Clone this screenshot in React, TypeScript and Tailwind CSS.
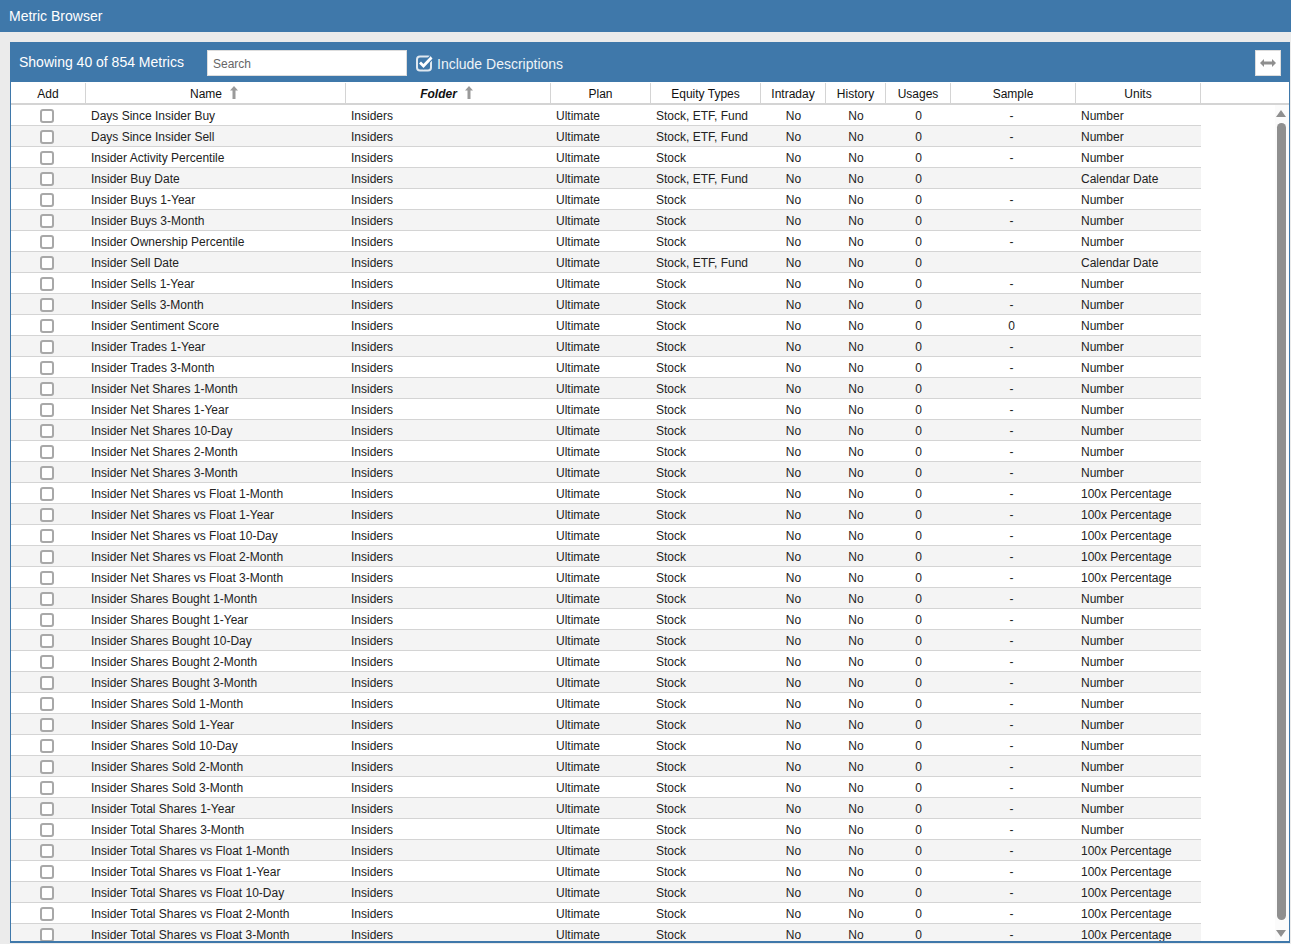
import React from 'react'

type Row = { name: string; types?: string; units?: string; sample?: string }

const rows: Row[] = [
  { name: 'Days Since Insider Buy', types: 'Stock, ETF, Fund' },
  { name: 'Days Since Insider Sell', types: 'Stock, ETF, Fund' },
  { name: 'Insider Activity Percentile' },
  { name: 'Insider Buy Date', types: 'Stock, ETF, Fund', units: 'Calendar Date', sample: '' },
  { name: 'Insider Buys 1-Year' },
  { name: 'Insider Buys 3-Month' },
  { name: 'Insider Ownership Percentile' },
  { name: 'Insider Sell Date', types: 'Stock, ETF, Fund', units: 'Calendar Date', sample: '' },
  { name: 'Insider Sells 1-Year' },
  { name: 'Insider Sells 3-Month' },
  { name: 'Insider Sentiment Score', sample: '0' },
  { name: 'Insider Trades 1-Year' },
  { name: 'Insider Trades 3-Month' },
  { name: 'Insider Net Shares 1-Month' },
  { name: 'Insider Net Shares 1-Year' },
  { name: 'Insider Net Shares 10-Day' },
  { name: 'Insider Net Shares 2-Month' },
  { name: 'Insider Net Shares 3-Month' },
  { name: 'Insider Net Shares vs Float 1-Month', units: '100x Percentage' },
  { name: 'Insider Net Shares vs Float 1-Year', units: '100x Percentage' },
  { name: 'Insider Net Shares vs Float 10-Day', units: '100x Percentage' },
  { name: 'Insider Net Shares vs Float 2-Month', units: '100x Percentage' },
  { name: 'Insider Net Shares vs Float 3-Month', units: '100x Percentage' },
  { name: 'Insider Shares Bought 1-Month' },
  { name: 'Insider Shares Bought 1-Year' },
  { name: 'Insider Shares Bought 10-Day' },
  { name: 'Insider Shares Bought 2-Month' },
  { name: 'Insider Shares Bought 3-Month' },
  { name: 'Insider Shares Sold 1-Month' },
  { name: 'Insider Shares Sold 1-Year' },
  { name: 'Insider Shares Sold 10-Day' },
  { name: 'Insider Shares Sold 2-Month' },
  { name: 'Insider Shares Sold 3-Month' },
  { name: 'Insider Total Shares 1-Year' },
  { name: 'Insider Total Shares 3-Month' },
  { name: 'Insider Total Shares vs Float 1-Month', units: '100x Percentage' },
  { name: 'Insider Total Shares vs Float 1-Year', units: '100x Percentage' },
  { name: 'Insider Total Shares vs Float 10-Day', units: '100x Percentage' },
  { name: 'Insider Total Shares vs Float 2-Month', units: '100x Percentage' },
  { name: 'Insider Total Shares vs Float 3-Month', units: '100x Percentage' },
]

function SortArrow() {
  return (
    <svg width="8" height="13" viewBox="0 0 8 13" className="ml-[8px] mr-[3px] mb-[3px]">
      <path d="M4 0 L8 4.5 L5.5 4.5 L5.5 13 L2.5 13 L2.5 4.5 L0 4.5 Z" fill="#9a9a9a" />
    </svg>
  )
}

function HeaderCell({ w, children }: { w: string; children?: React.ReactNode }) {
  return (
    <div className={`${w} flex-none h-full flex items-center justify-center pt-[1px] border-r border-[#d4d4d4]`}>
      {children}
    </div>
  )
}

export default function App() {
  return (
    <div className="h-[944px] overflow-hidden bg-[#ebebeb] text-[12px] text-[#222222] font-['Liberation_Sans',Arial,sans-serif]">
      <div className="h-[32px] bg-[#3f78aa] flex items-center pl-[9px] text-[14px] text-white">Metric Browser</div>

      <div className="mt-[10px] ml-[10px] mr-[1px] h-[901px] flex flex-col bg-white border-l border-r border-b-2 border-[#3f78aa]">
        <div className="h-[40px] flex-none -mx-px bg-[#3f78aa] flex items-center text-white">
          <span className="ml-[9px] w-[188px] text-[14px] leading-none mb-[1px]">Showing 40 of 854 Metrics</span>
          <input
            readOnly
            placeholder="Search"
            className="w-[200px] h-[26px] mt-[2px] bg-white border border-[#dddddd] px-[5px] pt-[1px] text-[12px] text-[#444444] placeholder:text-[#666666] outline-none"
          />
          <svg width="18" height="18" viewBox="0 0 18 18" className="ml-[8px] mt-[1px]">
            <rect x="2" y="2.5" width="14" height="14" rx="3" fill="none" stroke="#dfe8f0" strokeWidth="2" />
            <path d="M5 8.5 L8.5 12 L16.5 3.5" fill="none" stroke="#3f78aa" strokeWidth="5" />
            <path d="M5 8.5 L8.5 12 L16.5 3.5" fill="none" stroke="#ffffff" strokeWidth="2.8" />
          </svg>
          <span className="ml-[4px] mt-[4px] text-[14px] text-[#eef3f7]">Include Descriptions</span>
          <button className="ml-auto mr-[9px] mt-[2px] w-[26px] h-[26px] bg-white border border-[#dddddd] flex items-center justify-center">
            <svg width="16" height="8" viewBox="0 0 16 8">
              <path d="M0 4 L4 0 L4 2.5 L12 2.5 L12 0 L16 4 L12 8 L12 5.5 L4 5.5 L4 8 Z" fill="#8f8f8f" />
            </svg>
          </button>
        </div>

        <div className="h-[22px] flex-none mt-px flex items-stretch border-b-2 border-[#d4d4d4] text-[#111111]">
          <HeaderCell w="w-[75px]">Add</HeaderCell>
          <HeaderCell w="w-[260px]">Name<SortArrow /></HeaderCell>
          <HeaderCell w="w-[205px]"><span className="font-bold italic">Folder</span><SortArrow /></HeaderCell>
          <HeaderCell w="w-[100px]">Plan</HeaderCell>
          <HeaderCell w="w-[110px]">Equity Types</HeaderCell>
          <HeaderCell w="w-[65px]">Intraday</HeaderCell>
          <HeaderCell w="w-[60px]">History</HeaderCell>
          <HeaderCell w="w-[65px]">Usages</HeaderCell>
          <HeaderCell w="w-[125px]">Sample</HeaderCell>
          <HeaderCell w="w-[125px]">Units</HeaderCell>
        </div>

        <div className="flex-1 min-h-0 flex overflow-hidden">
          <div className="w-[1190px] flex-none">
            {rows.map((r, i) => (
              <div
                key={r.name}
                className={`h-[21px] flex items-center pt-[1px] border-b border-[#d4d4d4] ${i % 2 === 1 ? 'bg-[#f4f4f4]' : 'bg-white'}`}
              >
                <div className="w-[75px] flex-none flex justify-center pr-[4px]">
                  <span className="block w-[14px] h-[14px] rounded-[3px] border-2 border-[#a8a8a8] bg-white" />
                </div>
                <div className="w-[260px] flex-none pl-[5px]">{r.name}</div>
                <div className="w-[205px] flex-none pl-[5px]">Insiders</div>
                <div className="w-[100px] flex-none pl-[5px]">Ultimate</div>
                <div className="w-[110px] flex-none pl-[5px]">{r.types ?? 'Stock'}</div>
                <div className="w-[65px] flex-none text-center">No</div>
                <div className="w-[60px] flex-none text-center">No</div>
                <div className="w-[65px] flex-none text-center">0</div>
                <div className="w-[125px] flex-none text-center pr-[4px]">{r.sample ?? '-'}</div>
                <div className="w-[125px] flex-none pl-[5px]">{r.units ?? 'Number'}</div>
              </div>
            ))}
          </div>
          <div className="flex-1 relative">
            <div className="absolute right-0 top-0 bottom-0 w-[14px] bg-[#fbfbfb]" />
            <span className="absolute right-[3px] top-[5px] w-0 h-0 border-l-[5px] border-r-[5px] border-b-[7px] border-l-transparent border-r-transparent border-b-[#8f8f8f]" />
            <span className="absolute right-[3px] top-[18px] w-[9px] h-[797px] rounded-[5px] bg-[#8f8f8f]" />
            <span className="absolute right-[3px] bottom-[4px] w-0 h-0 border-l-[5px] border-r-[5px] border-t-[7px] border-l-transparent border-r-transparent border-t-[#8f8f8f]" />
          </div>
        </div>
      </div>
    </div>
  )
}
